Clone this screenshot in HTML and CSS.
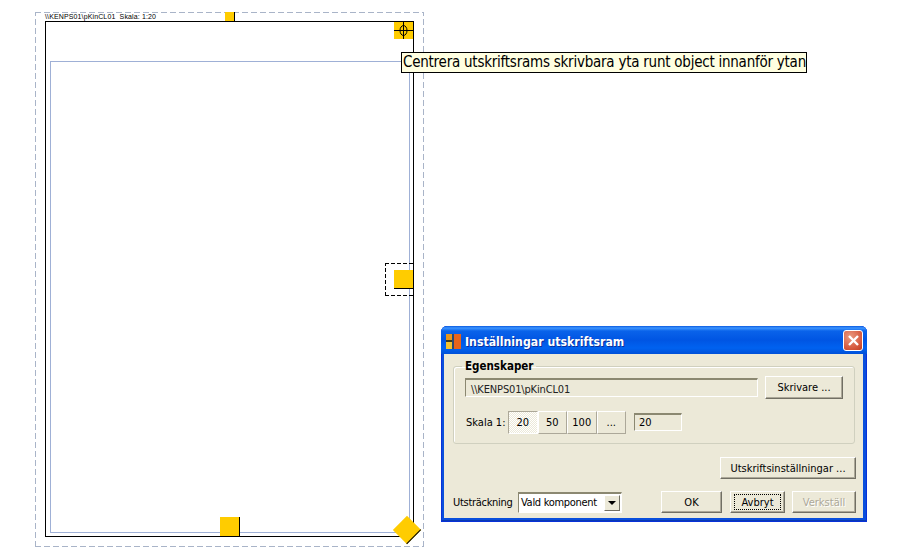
FILE: index.html
```html
<!DOCTYPE html>
<html lang="sv">
<head>
<meta charset="utf-8">
<title>Inställningar utskriftsram</title>
<link rel="stylesheet" href="styles.css">
</head>
<body>
<main class="desk">
  <div class="paper-dash"></div>
  <div class="frame"></div>
  <div class="printable"></div>
  <div class="caption">\\KENPS01\pKinCL01&nbsp; Skala: 1:20</div>
  <div class="handle h-top"></div>
  <div class="handle h-center">
    <svg width="19" height="17" viewBox="0 0 19 17"><path d="M0 8.5H19M9.5 0V17" stroke="#000" fill="none"/><ellipse cx="9.5" cy="8.5" rx="3.5" ry="5" stroke="#000" fill="none"/></svg>
  </div>
  <div class="tooltip">Centrera utskriftsrams skrivbara yta runt object innanför ytan</div>
  <div class="h-mid-dash"></div>
  <div class="handle h-mid"></div>
  <div class="handle h-bottom"></div>
  <div class="h-diamond"></div>

  <section class="dialog">
    <header class="titlebar">
      <svg class="app-icon" width="15" height="15" viewBox="0 0 15 15"><rect x="0" y="0" width="6" height="6" fill="#e8961c"/><rect x="0" y="8" width="6" height="7" fill="#f2c230"/><rect x="8" y="0" width="7" height="15" fill="#e8641b"/><rect x="0" y="6" width="6" height="2" fill="#3a3a20"/><rect x="6" y="0" width="2" height="15" fill="#2d4a70"/></svg>
      <h1 class="title">Inställningar utskriftsram</h1>
      <button class="close" type="button" aria-label="Stäng">
        <svg width="13" height="13" viewBox="0 0 13 13"><path d="M2 2L11 11M11 2L2 11" stroke="#fff" stroke-width="2.4" fill="none"/></svg>
      </button>
    </header>
    <div class="client">
      <fieldset class="group">
        <legend class="legend">Egenskaper</legend>
        <div class="row-printer">
          <div class="field-disabled">\\KENPS01\pKinCL01</div>
          <div class="btn btn-printer">Skrivare ...</div>
        </div>
        <div class="row-scale">
          <span class="label-scale">Skala 1:</span>
          <div class="seg">
            <div class="seg-btn seg-on">20</div>
            <div class="seg-btn">50</div>
            <div class="seg-btn">100</div>
            <div class="seg-btn">...</div>
          </div>
          <div class="field-scale">20</div>
        </div>
      </fieldset>
      <div class="row-setup"><div class="btn btn-setup">Utskriftsinställningar ...</div></div>
      <div class="row-foot">
        <span class="label-extent">Utsträckning</span>
        <div class="select">
          <span class="select-text">Vald komponent</span>
          <span class="select-arrow"></span>
        </div>
        <div class="foot-btns">
          <div class="btn btn-ok">OK</div>
          <div class="btn btn-cancel"><span class="focus">Avbryt</span></div>
          <div class="btn btn-apply">Verkställ</div>
        </div>
      </div>
    </div>
  </section>
</main>
</body>
</html>
```

FILE: styles.css
```css
* { box-sizing: border-box; }
html, body { margin: 0; padding: 0; background: #fff; }
.desk {
  position: relative;
  width: 902px;
  height: 553px;
  overflow: hidden;
  font-family: "DejaVu Sans", sans-serif;
  font-stretch: condensed;
  font-size: 11px;
  color: #000;
}

/* Free canvas: the print frame preview */
.paper-dash {
  position: absolute; left: 35px; top: 12px; width: 389px; height: 535px;
  background:
    repeating-linear-gradient(90deg, #a9b4c8 0 6px, transparent 6px 9px) left top / 100% 1px no-repeat,
    repeating-linear-gradient(90deg, #a9b4c8 0 6px, transparent 6px 9px) left bottom / 100% 1px no-repeat,
    repeating-linear-gradient(0deg, #a9b4c8 0 6px, transparent 6px 9px) left top / 1px 100% no-repeat,
    repeating-linear-gradient(0deg, #a9b4c8 0 6px, transparent 6px 9px) right top / 1px 100% no-repeat;
}
.frame { position: absolute; left: 45px; top: 21px; width: 369px; height: 516px; border: 1px solid #000; }
.printable { position: absolute; left: 50px; top: 61px; width: 360px; height: 472px; border: 1px solid #9fb0d6; }
.caption { position: absolute; left: 45px; top: 12px; font: 7px/9px "Liberation Sans", sans-serif; letter-spacing: .13px; white-space: nowrap; }
.handle { position: absolute; background: #ffcc00; }
.h-top { left: 225px; top: 12px; width: 10px; height: 9px; border-right: 1px solid #000; }
.h-center { left: 394px; top: 22px; width: 19px; height: 17px; display: flex; }
.h-mid-dash {
  position: absolute; left: 385px; top: 263px; width: 28px; height: 33px;
  background:
    repeating-linear-gradient(90deg, #000 0 4px, transparent 4px 6px) left top / 100% 1px no-repeat,
    repeating-linear-gradient(90deg, #000 0 4px, transparent 4px 6px) left bottom / 100% 1px no-repeat,
    repeating-linear-gradient(0deg, #000 0 4px, transparent 4px 6px) left top / 1px 100% no-repeat;
}
.h-mid { left: 394px; top: 270px; width: 19px; height: 19px; border-bottom: 1px solid #000; }
.h-bottom { left: 220px; top: 517px; width: 20px; height: 19px; border-right: 1px solid #000; }
.h-diamond { position: absolute; left: 397px; top: 520px; width: 20px; height: 20px; background: #ffcc00; transform: rotate(45deg); border-right: 1px solid #000; }
.tooltip { position: absolute; left: 401px; top: 52px; width: 406px; height: 21px; background: #ffffe1; border: 1px solid #000; font-size: 15px; letter-spacing: -.24px; line-height: 19px; padding-left: 1px; white-space: nowrap; }

/* Dialog window */
.dialog { position: absolute; left: 441px; top: 326px; width: 426px; height: 196px; display: flex; flex-direction: column; background: #0a4fdc; border-radius: 6px 6px 0 0; box-shadow: inset 0 0 0 1px #0831d9, inset 0 -2px 0 #0a3ab0; }
.titlebar { height: 28px; flex: none; display: flex; align-items: center; padding: 3px 5px 0; border-radius: 6px 6px 0 0; background: linear-gradient(#0a5ae0 0, #3d95ff 2px, #0a63ea 5px, #0055e3 14px, #0062f0 22px, #0050d8 28px); }
.app-icon { flex: none; }
.title { margin: 0 0 0 4px; flex: 1; font-size: 12.2px; font-weight: bold; color: #fff; text-shadow: 1px 1px 0 #0a2f9c; white-space: nowrap; }
.close { width: 20px; height: 21px; padding: 0; margin: -2px -1px 0 0; flex: none; display: flex; align-items: center; justify-content: center; border: 1px solid #fff; border-radius: 3px; background: radial-gradient(circle at 35% 30%, #ea9a80, #d4553a 70%, #bd3f22); }
.client { flex: 1; margin: 0 4px 4px 3px; background: #ece9d8; padding: 6px 8px 0 9px; display: flex; flex-direction: column; }
.group { margin: 0; padding: 0 0 0 11px; height: 84px; border: 1px solid #d0d0bf; border-radius: 3px; box-shadow: 1px 1px 0 #fff inset; flex: none; }
.legend { padding: 0 3px; margin-left: -3px; font-weight: bold; font-size: 11.5px; line-height: 13px; }
.row-printer { display: flex; align-items: center; gap: 7px; height: 22px; margin-top: 3px; }
.field-disabled { width: 293px; height: 19px; background: #ece9d8; border: 1px solid; border-color: #8b8871 #fff #fff #8b8871; border-top-width: 2px; padding-left: 5px; line-height: 20px; letter-spacing: -.15px; color: #222; }
.btn { display: flex; align-items: center; justify-content: center; background: #ece9d8; border: 1px solid; border-color: #fff #716f64 #716f64 #fff; box-shadow: inset -1px -1px 0 #aca899; white-space: nowrap; }
.btn-printer { width: 78px; height: 23px; }
.row-scale { display: flex; align-items: center; height: 24px; margin-top: 12px; }
.label-scale { width: 43px; flex: none; padding-left: 1px; }
.seg { display: flex; flex: none; }
.seg-btn { width: 29.5px; height: 23px; display: flex; align-items: center; justify-content: center; border: 1px solid; border-color: #fff #aca899 #aca899 #fff; }
.seg-on { background: repeating-conic-gradient(#fff 0 25%, #ece9d8 0 50%) 0 0 / 2px 2px; border-color: #aca899 #fff #fff #aca899; }
.field-scale { width: 48px; height: 18px; margin-left: 8px; flex: none; border: 1px solid; border-color: #8b8871 #fff #fff #8b8871; border-top-width: 2px; padding-left: 4px; line-height: 15px; }
.row-setup { display: flex; justify-content: flex-end; margin: 13px -1px 0 0; }
.btn-setup { width: 136px; height: 22px; }
.row-foot { display: flex; align-items: center; margin-top: 12px; margin-right: -1px; }
.label-extent { width: 65px; flex: none; letter-spacing: -.3px; }
.select { width: 104px; height: 21px; flex: none; display: flex; align-items: center; background: #fff; border: 1px solid; border-color: #8b8871 #fff #fff #8b8871; border-top-width: 2px; border-left-width: 1px; }
.select-text { flex: 1; padding-left: 2px; white-space: nowrap; letter-spacing: -.3px; }
.select-arrow { width: 16px; height: 16px; margin-right: 1px; background: #ece9d8; border: 1px solid; border-color: #fff #716f64 #716f64 #fff; position: relative; }
.select-arrow::after { content: ""; position: absolute; left: 3px; top: 5px; border: 4px solid transparent; border-top: 4px solid #000; border-bottom: 0; }
.foot-btns { margin-left: auto; display: flex; gap: 8px; }
.foot-btns .btn { height: 22px; }
.btn-ok { width: 61px; }
.btn-cancel { width: 55px; }
.focus { display: flex; align-items: center; justify-content: center; width: 100%; margin: 0 3px; height: 16px; border: 1px dotted #000; }
.foot-btns .btn-apply { width: 64px; margin-left: -1px; color: #aca899; text-shadow: 1px 1px 0 #fff; }
```
